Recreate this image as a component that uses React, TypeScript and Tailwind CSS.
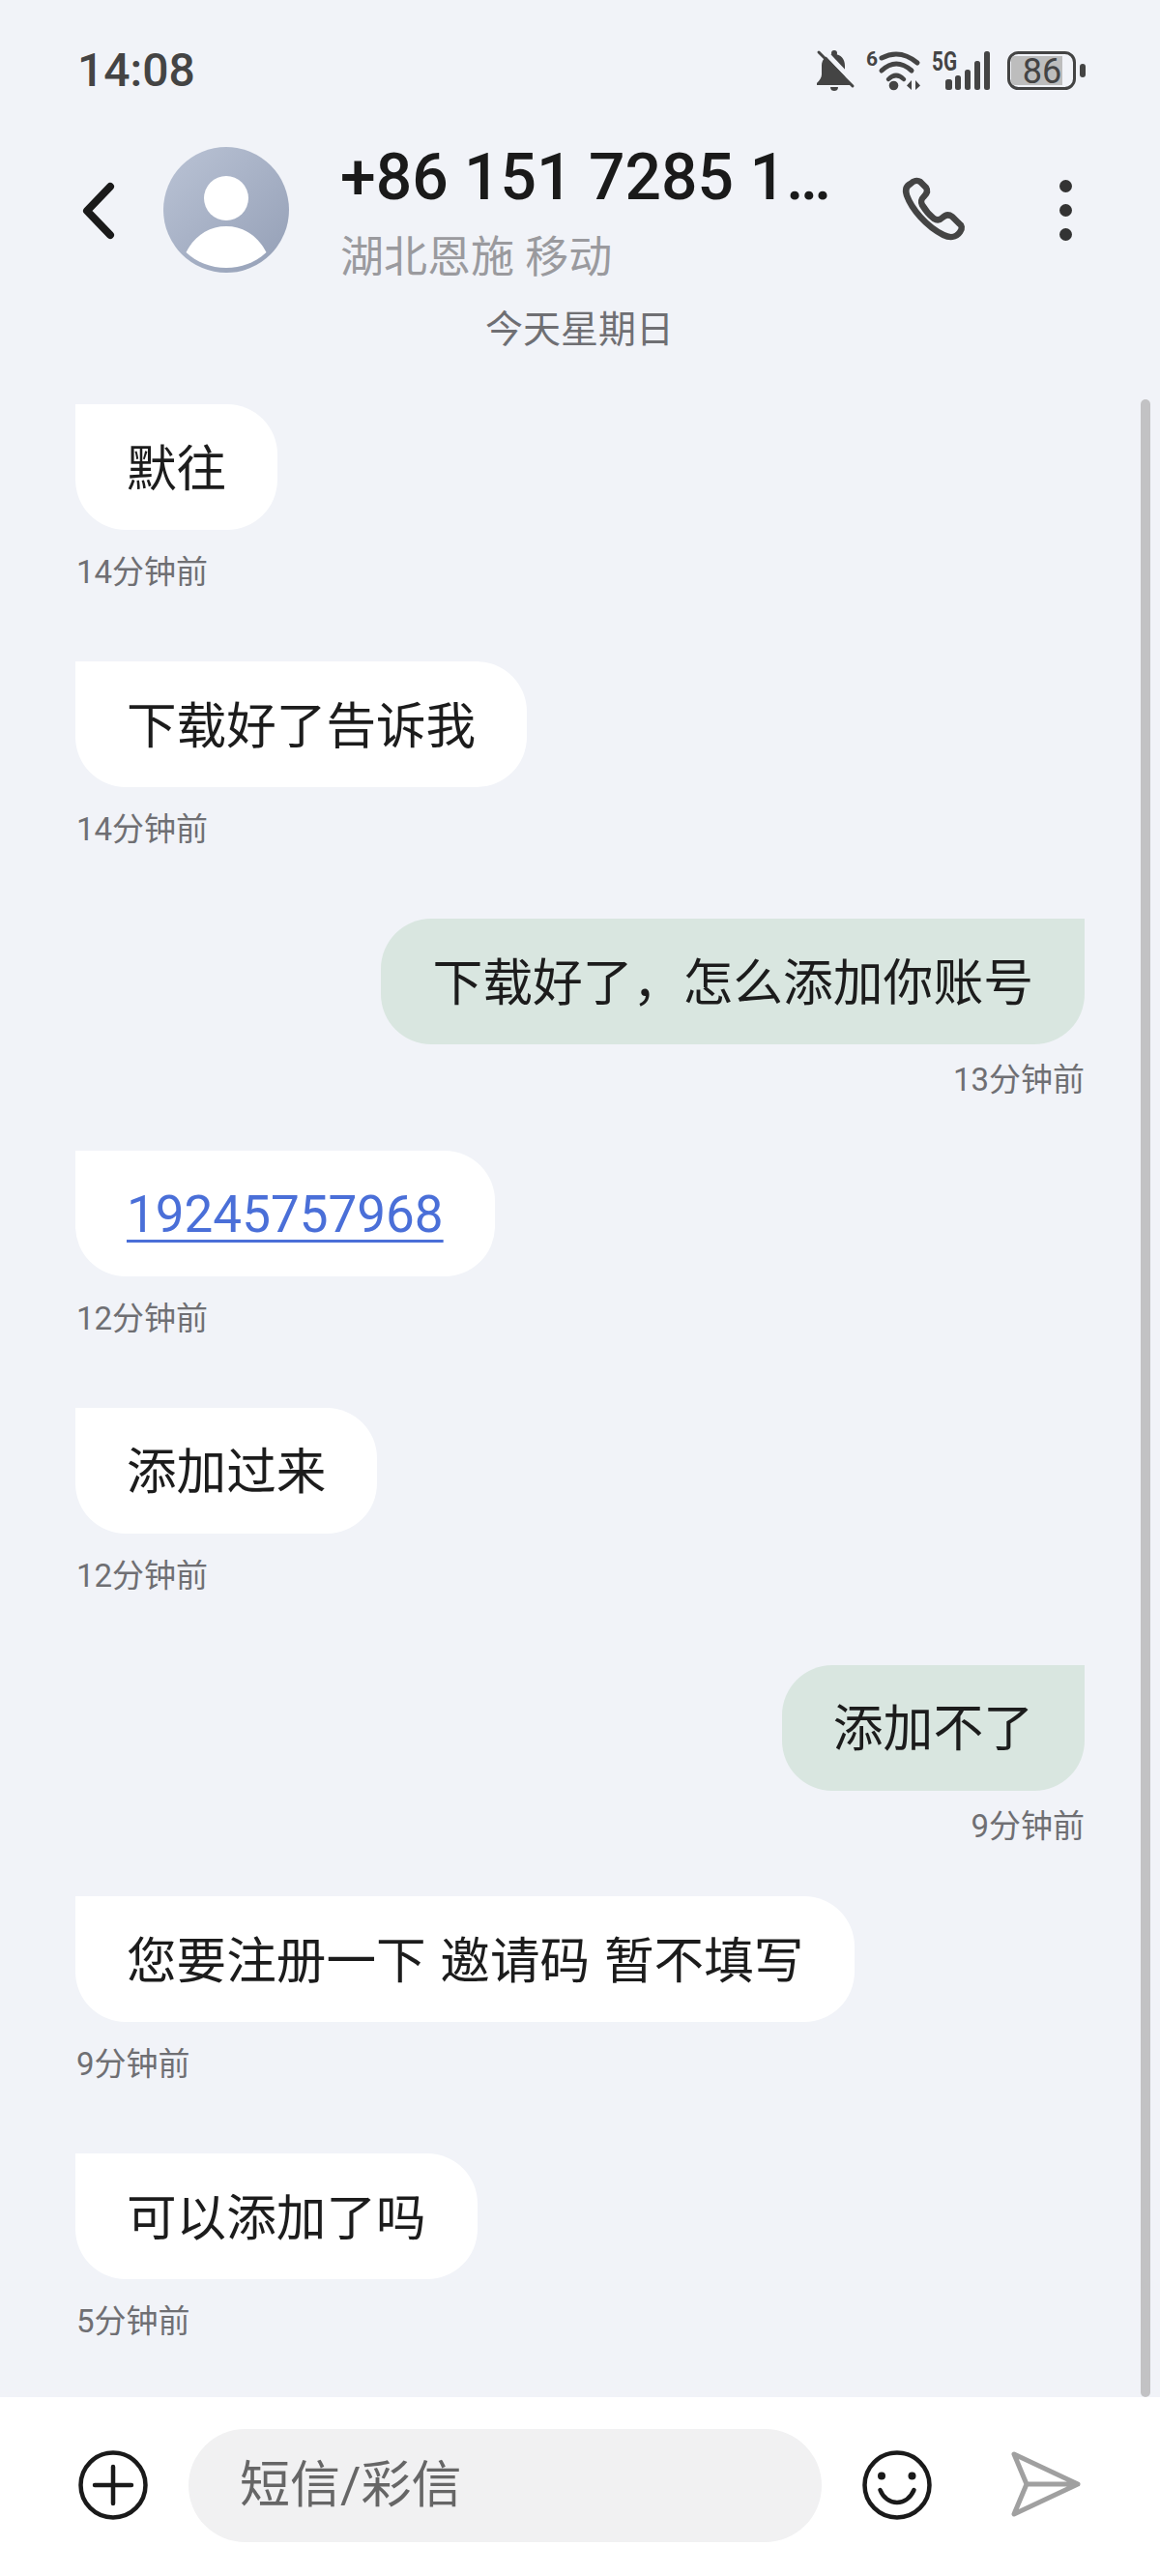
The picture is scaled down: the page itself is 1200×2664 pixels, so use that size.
interface Msg {
  text: string;
  time: string;
  sent?: boolean;
  link?: boolean;
}

const messages: Msg[] = [
  { text: '默往', time: '14分钟前' },
  { text: '下载好了告诉我', time: '14分钟前' },
  { text: '下载好了，怎么添加你账号', time: '13分钟前', sent: true },
  { text: '19245757968', time: '12分钟前', link: true },
  { text: '添加过来', time: '12分钟前' },
  { text: '添加不了', time: '9分钟前', sent: true },
  { text: '您要注册一下 邀请码 暂不填写', time: '9分钟前' },
  { text: '可以添加了吗', time: '5分钟前' },
];

const StatusIcons = () => (
  <svg width="290" height="56" viewBox="0 0 290 56" className="shrink-0">
    {/* bell, origin at x=835 y=45 */}
    <circle cx="28" cy="10" r="3" fill="#444" />
    <path d="M28 11c7 0 11 5 11 12v9c0 3 2 6 5 9v2H10v-2c3-3 5-6 5-9v-9c0-7 5-12 13-12z" fill="#444" />
    <path d="M24 45h8c0 3-2 4-4 4s-4-1-4-4z" fill="#444" />
    <path d="M15 5l36 38" stroke="#f1f3f8" strokeWidth="5" />
    <path d="M12 9l35 35" stroke="#444" strokeWidth="3" strokeLinecap="round" />
    {/* wifi */}
    <text x="61" y="23" fontFamily="Roboto" fontSize="21" fontWeight="700" fill="#444">6</text>
    <path d="M77 15Q96 5 114 20" fill="none" stroke="#444" strokeWidth="5" strokeLinecap="round" />
    <path d="M77 28Q92 14 108 28" fill="none" stroke="#444" strokeWidth="5" strokeLinecap="round" />
    <path d="M84 37Q92 29 100 37" fill="none" stroke="#444" strokeWidth="4.500" strokeLinecap="round" />
    <circle cx="89.500" cy="43.500" r="4.800" fill="#444" />
    <path d="M103 43.500l5-5.500v10zM112 38v10l5-4.500z" fill="#444" />
    {/* 5G and bars */}
    <text x="129" y="28" fontFamily="Roboto" fontSize="27" fontWeight="700" fill="#444" textLength="26" lengthAdjust="spacingAndGlyphs">5G</text>
    <rect x="143" y="37" width="7" height="11" rx="2.500" fill="#444" />
    <rect x="153" y="33" width="6" height="15" rx="2.500" fill="#444" />
    <rect x="163" y="27" width="6" height="21" rx="2.500" fill="#444" />
    <rect x="173" y="18" width="6" height="30" rx="2.500" fill="#444" />
    <rect x="183" y="8" width="6" height="40" rx="2.500" fill="#444" />
    {/* battery */}
    <rect x="208.500" y="9.500" width="68" height="37" rx="10" fill="none" stroke="#444" strokeWidth="3" />
    <path d="M215 13h49v30h-49a4 4 0 0 1-4-4V17a4 4 0 0 1 4-4z" fill="#bdbdbd" />
    <text x="243" y="41" textAnchor="middle" fontFamily="Roboto" fontSize="36" fill="#444">86</text>
    <rect x="282" y="21" width="6" height="14" rx="3" fill="#444" />
  </svg>
);

const Avatar = () => (
  <svg width="130" height="130" viewBox="0 0 130 130" className="shrink-0">
    <defs>
      <linearGradient id="av" x1="0" y1="0" x2="1" y2="1">
        <stop offset="0" stopColor="#bac3d5" />
        <stop offset="1" stopColor="#949fb6" />
      </linearGradient>
    </defs>
    <circle cx="65" cy="65" r="65" fill="url(#av)" />
    <circle cx="65" cy="53" r="23" fill="#fff" />
    <path d="M23.500 109C32 92 47 82 65 82s33 10 41.500 27C96 119 81 125 65 125s-31-6-41.500-16z" fill="#fff" />
  </svg>
);

const Bubble = ({ text, time, sent, link }: Msg) => (
  <div className={sent ? 'flex flex-col items-end mb-[54.5px]' : 'flex flex-col items-start mb-[74px]'}>
    <div
      className={
        sent
          ? 'h-[130px] px-[53px] pt-[5px] flex items-center rounded-[52px] rounded-tr-none bg-[#d9e6e0] text-[51.8px] text-[#1c1c1c]'
          : 'h-[130px] px-[53px] pt-[5px] flex items-center rounded-[52px] rounded-tl-none bg-white text-[51.6px] text-[#1c1c1c]'
      }
    >
      {link ? (
        <span className="text-[53px] text-[#4a6fd8] underline decoration-[3px] underline-offset-[8px]">{text}</span>
      ) : (
        <span className="whitespace-pre [word-spacing:2px]">{text}</span>
      )}
    </div>
    <div
      className={
        sent
          ? 'mt-[19px] h-[36px] leading-[36px] text-[33px] text-[#6f6f73]'
          : 'mt-[26px] h-[36px] leading-[36px] ml-[1px] text-[33px] text-[#6f6f73]'
      }
    >
      {time}
    </div>
  </div>
);

export default function App() {
  return (
    <div className="relative w-[1200px] h-[2664px] flex flex-col overflow-hidden bg-[#f1f3f8] font-[Roboto,'Noto_Sans_CJK_SC',sans-serif]">
      {/* status bar */}
      <div className="h-[142px] pt-[4px] pl-[80px] pr-[75px] flex items-center justify-between">
        <span className="text-[48px] font-medium text-[#444444] leading-none">14:08</span>
        <StatusIcons />
      </div>

      {/* header */}
      <div className="h-[150px] flex items-center">
        <svg width="44" height="66" viewBox="0 0 44 66" className="ml-[80px] shrink-0">
          <path d="M34 9L10 34l24 25" fill="none" stroke="#1a1a1a" strokeWidth="8" strokeLinecap="round" strokeLinejoin="round" />
        </svg>
        <div className="ml-[45px]">
          <Avatar />
        </div>
        <div className="ml-[53px] w-[541px] self-start pt-[5px]">
          <div className="text-[66px] leading-[74px] font-medium text-[#1a1a1a] whitespace-nowrap">+86 151 7285 1…</div>
          <div className="mt-[18px] text-[45px] leading-[56px] text-[#9a9a9e] whitespace-pre">湖北恩施 移动</div>
        </div>
        <svg width="85" height="85" viewBox="0 0 85 85" className="ml-[32px] shrink-0">
          <path
            d="M17 15C13 17 11 21 13 27C18 41 33 59 51 68C57 71 64 71 68 65C71 61 70 58 67 56L60 49C56 46 53 47 50 50C47 53 44 53 41 51C36 47 32 42 29 37C27 33 28 31 31 28C34 25 35 22 33 19L27 13C24 11 20 12 17 15Z"
            fill="none"
            stroke="#444"
            strokeWidth="6.500"
            strokeLinejoin="round"
          />
        </svg>
        <div className="ml-[86px] flex flex-col gap-[12px] shrink-0">
          <div className="w-[13px] h-[13px] rounded-full bg-[#333333]" />
          <div className="w-[13px] h-[13px] rounded-full bg-[#333333]" />
          <div className="w-[13px] h-[13px] rounded-full bg-[#333333]" />
        </div>
      </div>

      {/* date */}
      <div className="h-[96px] pt-[2px] flex items-center justify-center pr-[1px] text-[39px] text-[#6f6f73]">今天星期日</div>

      {/* thread */}
      <div className="flex-1 pt-[30px] pl-[78px] pr-[78px] min-h-0">
        {messages.map((m, i) => (
          <Bubble key={i} {...m} />
        ))}
      </div>

      {/* scrollbar */}
      <div className="absolute left-[1180px] top-[413px] h-[2066px] w-[10px] rounded-full bg-[#c2c2c4]" />

      {/* composer */}
      <div className="h-[185px] shrink-0 bg-white flex items-center pb-[3px] pl-[81px]">
        <svg width="72" height="72" viewBox="0 0 72 72" className="shrink-0">
          <circle cx="36" cy="36" r="33.500" fill="none" stroke="#1a1a1a" strokeWidth="4.500" />
          <path d="M17 36h38M36 17v38" stroke="#1a1a1a" strokeWidth="4.500" strokeLinecap="round" />
        </svg>
        <div className="ml-[42px] w-[655px] h-[117px] rounded-full bg-[#f1f1f2] flex items-center pl-[53px] pt-[2px] text-[52px] text-[#666666]">
          短信/彩信
        </div>
        <svg width="72" height="72" viewBox="0 0 72 72" className="ml-[42px] shrink-0">
          <circle cx="36" cy="36" r="33.500" fill="none" stroke="#1a1a1a" strokeWidth="4.500" />
          <circle cx="20" cy="26.500" r="4" fill="#1a1a1a" />
          <circle cx="51.500" cy="26.500" r="4" fill="#1a1a1a" />
          <path d="M18.500 41c3 8 10 13 17.500 13s14-5 17.500-13" fill="none" stroke="#1a1a1a" strokeWidth="4.500" strokeLinecap="round" />
        </svg>
        <svg width="72" height="72" viewBox="0 0 72 72" className="ml-[82px] shrink-0">
          <path d="M3 4l66 31-66 31 13-31zM16 35h53" fill="none" stroke="#a0a0a0" strokeWidth="5" strokeLinejoin="round" strokeLinecap="round" />
        </svg>
      </div>
    </div>
  );
}
